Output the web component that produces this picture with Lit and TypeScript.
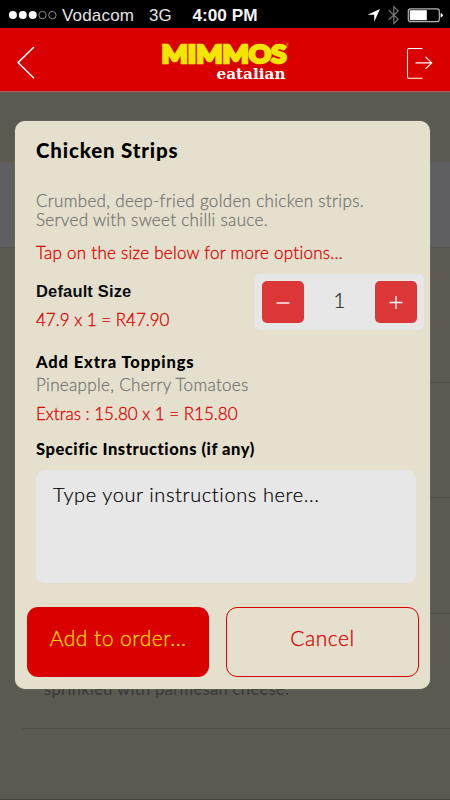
import { LitElement, html, css } from "lit";
import { customElement, state } from "lit/decorators.js";

@customElement("status-bar")
class StatusBar extends LitElement {
  static styles = css`
    :host { display: block; height: 28px; background: #000; }
    svg { display: block; }
    .t { font: 17px "Liberation Sans", sans-serif; fill: #e4e4e4; }
    .b { font-weight: bold; fill: #f4f4f4; }
  `;
  render() {
    return html`<svg width="450" height="28" viewBox="0 0 450 28">
      <g fill="#fff"><circle cx="12.9" cy="15.1" r="4"/><circle cx="22.8" cy="15.1" r="4"/><circle cx="32.7" cy="15.1" r="4"/></g>
      <g fill="none" stroke="#aaa" stroke-width=".8"><circle cx="42.5" cy="15.1" r="3.7"/><circle cx="52.4" cy="15.1" r="3.7"/></g>
      <text class="t" x="62" y="21" textLength="72">Vodacom</text>
      <text class="t" x="149" y="21" textLength="22.5" lengthAdjust="spacingAndGlyphs">3G</text>
      <text class="t b" x="192.5" y="21" textLength="65" lengthAdjust="spacingAndGlyphs">4:00 PM</text>
      <path d="M380 9L367.5 14.8H374.2V21.8Z" fill="#fff"/>
      <path d="M388.8 10.3L398.2 19.2L393.8 23.6V6.6L398.2 11L388.8 19.8" fill="none" stroke="#777" stroke-width="1.2"/>
      <rect x="408.3" y="8.8" width="31" height="12.8" rx="2.2" fill="none" stroke="#b4b4b4" stroke-width="1.2"/>
      <rect x="409.8" y="10.2" width="17" height="10" fill="#fff"/>
      <path d="M440.6 12.9q2.3 .7 2.3 2.3t-2.3 2.3z" fill="#fff"/>
    </svg>`;
  }
}

@customElement("brand-header")
class BrandHeader extends LitElement {
  static styles = css`
    :host { display: block; height: 64px; box-sizing: border-box; background: #da0000; border-bottom: 1px solid #b5615c; }
    svg { display: block; }
    .name { font: 900 24.5px Lato, sans-serif; fill: #f2e600; stroke: #f2e600; stroke-width: 2.5; stroke-linejoin: miter; stroke-miterlimit: 3; }
    .sub { font: bold 14px "DejaVu Serif", serif; fill: #fff; }
    .tm { font: 3px Lato, sans-serif; fill: #f2e600; }
  `;
  render() {
    return html`<svg width="450" height="63" viewBox="0 28 450 63">
      <path d="M34 47L18 62.6L34 78.2" fill="none" stroke="#fff" stroke-width="1.5"/>
      <text class="name" x="161.5" y="62.7" textLength="125" lengthAdjust="spacingAndGlyphs">MIMMOS</text>
      <text class="tm" x="286" y="46">®</text>
      <text class="sub" x="216.5" y="79" textLength="69" lengthAdjust="spacingAndGlyphs">eatalian</text>
      <path d="M422.5 48.5H409Q407.5 48.5 407.5 50V77Q407.5 78.3 409 78.3H422.5M415.5 62.9H431.5M425.5 56.9L431.7 62.9L425.5 68.9" fill="none" stroke="#fff" stroke-width="1.1"/>
    </svg>`;
  }
}

@customElement("app-root")
class AppRoot extends LitElement {
  @state() quantity = 1;

  static styles = css`
    :host { display: block; position: relative; width: 450px; height: 800px; overflow: hidden; background: #5c5951; font-family: Lato, sans-serif; font-weight: 400; font-variant-ligatures: none; }
    .menu { display: flex; flex-direction: column; height: 708px; box-sizing: border-box; border-bottom: 1px solid #45423e; }
    .spacer { height: 70px; }
    .section { height: 86px; box-sizing: border-box; background: #5f5f61; border-bottom: 1px solid #55544f; }
    .item { box-sizing: border-box; height: 115.5px; margin-left: 22px; padding: 65px 0 0 22px; border-bottom: 1px solid #504e4a; color: #383b37; font-size: 16.5px; line-height: 20px; letter-spacing: .34px; }
    .item.first { height: 134.5px; }
    .card { position: absolute; left: 15.3px; top: 120.5px; width: 415.2px; height: 568.5px; box-sizing: border-box; padding: 17px 15px 0 20.7px; border-radius: 10px; background: #e5e0ce; box-shadow: 0 0 1px #b8b4a6; }
    .title { height: 53px; font-size: 20.5px; line-height: 24px; font-weight: 900; color: #000; letter-spacing: .82px; }
    .line { font-size: 17px; line-height: 20px; white-space: nowrap; font-weight: 300; -webkit-text-stroke: .3px currentColor; }
    .grey { color: #7a7975; }
    .red { color: #da0000; }
    .desc { line-height: 19.5px; letter-spacing: .32px; }
    .tap { margin-top: 13px; letter-spacing: .26px; }
    .size { display: flex; justify-content: space-between; margin: 11.5px -8.1px 0 0; height: 56px; }
    .size-name { margin-top: 7px; font: bold 16.5px/20px "Liberation Sans", sans-serif; color: #0b0d10; letter-spacing: .16px; }
    .price { margin-top: 9px; }
    .stepper { display: flex; align-items: center; justify-content: space-between; width: 168.5px; height: 56px; box-sizing: border-box; padding: 0 7px; border-radius: 5px; background: #e7e7e7; }
    .step { display: grid; place-items: center; width: 42px; height: 42px; padding: 0; border: 0; border-radius: 5px; background: #db3736; }
    .count { margin-top: -4px; font-size: 21px; line-height: 24px; font-weight: 300; color: #222; -webkit-text-stroke: .2px currentColor; }
    .bold { font-weight: 900; font-size: 16.5px; color: #000; -webkit-text-stroke: 0; }
    .extra { margin-top: 22px; letter-spacing: .88px; }
    .toppings { margin-top: 3px; letter-spacing: .33px; }
    .extras-price { margin-top: 9px; }
    .instructions { margin-top: 15px; letter-spacing: .54px; }
    .notes { display: block; width: 380px; height: 113px; margin-top: 11px; box-sizing: border-box; padding: 12px 17px; border: 0; border-radius: 9px; background: #e7e7e7; color: #000; font: 300 20px/24px Lato, sans-serif; font-variant-ligatures: none; letter-spacing: .61px; resize: none; outline: 0; -webkit-text-stroke: .2px currentColor; }
    .notes::placeholder { color: #000; opacity: 1; }
    .actions { display: flex; gap: 16.5px; margin: 23.5px 0 0 -9px; }
    .btn { flex: none; height: 70px; box-sizing: border-box; padding: 0 0 7px; border-radius: 11px; font: 300 21px/24px Lato, sans-serif; letter-spacing: .5px; -webkit-text-stroke: .3px currentColor; }
    .add { width: 182.2px; border: 0; background: #da0000; color: #ffd800; }
    .cancel { width: 193.5px; border: 1.4px solid #da0000; background: transparent; color: #da0000; }
  `;

  private change(by: number) {
    this.quantity = Math.max(1, this.quantity + by);
  }

  render() {
    return html`
      <status-bar></status-bar>
      <brand-header></brand-header>
      <div class="menu">
        <div class="spacer"></div>
        <div class="section"></div>
        <div class="item first"></div>
        <div class="item"></div>
        <div class="item"></div>
        <div class="item">sprinkled with parmesan cheese.</div>
      </div>
      <div class="card">
        <div class="title">Chicken Strips</div>
        <div class="line grey desc">Crumbed, deep-fried golden chicken strips.<br>Served with sweet chilli sauce.</div>
        <div class="line red tap">Tap on the size below for more options...</div>
        <div class="size">
          <div>
            <div class="size-name">Default Size</div>
            <div class="line red price">47.9 x ${this.quantity} = R${(47.9 * this.quantity).toFixed(2)}</div>
          </div>
          <div class="stepper">
            <button class="step" @click=${() => this.change(-1)} aria-label="Decrease"><svg width="14" height="14"><path d="M.5 8H13.5" stroke="#fff" stroke-width="1.4"/></svg></button>
            <span class="count">${this.quantity}</span>
            <button class="step" @click=${() => this.change(1)} aria-label="Increase"><svg width="14" height="14"><path d="M.5 7.5H13.5M7 1V14" stroke="#fff" stroke-width="1.3"/></svg></button>
          </div>
        </div>
        <div class="line bold extra">Add Extra Toppings</div>
        <div class="line grey toppings">Pineapple, Cherry Tomatoes</div>
        <div class="line red extras-price">Extras : 15.80 x 1 = R15.80</div>
        <div class="line bold instructions">Specific Instructions (if any)</div>
        <textarea class="notes" placeholder="Type your instructions here..."></textarea>
        <div class="actions">
          <button class="btn add">Add to order...</button>
          <button class="btn cancel">Cancel</button>
        </div>
      </div>
    `;
  }
}
